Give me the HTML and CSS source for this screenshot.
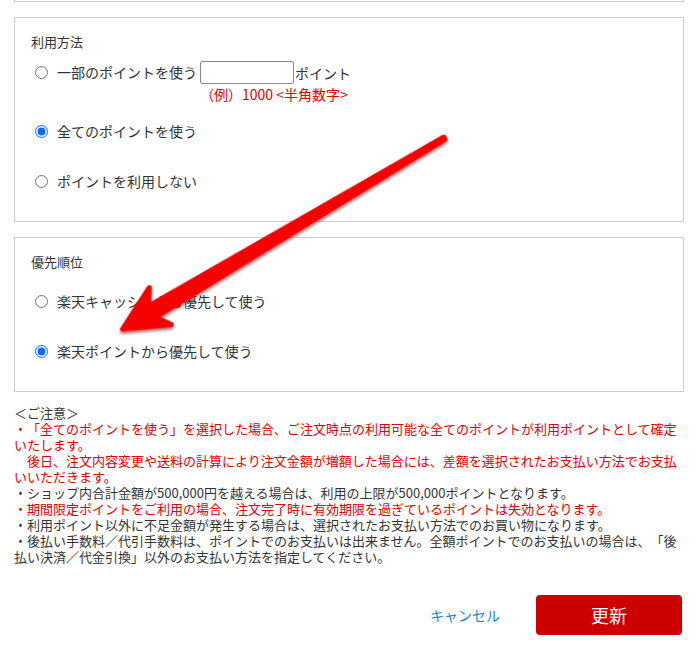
FILE: index.html
```html
<!DOCTYPE html>
<html lang="ja">
<head>
<meta charset="utf-8">
<title>ポイント利用</title>
<link rel="stylesheet" href="styles.css">
</head>
<body>
<div class="page">
  <div class="prev-box"></div>

  <section class="box">
    <div class="box-title">利用方法</div>
    <div class="option option-first">
      <input type="radio" name="use" class="radio radio-tall">
      <span class="label label-tall">一部のポイントを使う</span>
      <div class="amount">
        <div class="amount-line">
          <input type="text" class="amount-input">
          <span class="label">ポイント</span>
        </div>
        <div class="hint">（例）1000 &lt;半角数字&gt;</div>
      </div>
    </div>
    <div class="option option-second">
      <input type="radio" name="use" class="radio" checked>
      <span class="label">全てのポイントを使う</span>
    </div>
    <div class="option option-next">
      <input type="radio" name="use" class="radio">
      <span class="label">ポイントを利用しない</span>
    </div>
  </section>

  <section class="box">
    <div class="box-title">優先順位</div>
    <div class="option option-first-b">
      <input type="radio" name="prio" class="radio">
      <span class="label">楽天キャッシュから優先して使う</span>
    </div>
    <div class="option option-next">
      <input type="radio" name="prio" class="radio" checked>
      <span class="label">楽天ポイントから優先して使う</span>
    </div>
  </section>

  <div class="notes">
    <p>＜ご注意＞</p>
    <p class="red">・「全てのポイントを使う」を選択した場合、ご注文時点の利用可能な全てのポイントが利用ポイントとして確定いたします。<br>　後日、注文内容変更や送料の計算により注文金額が増額した場合には、差額を選択されたお支払い方法でお支払いいただきます。</p>
    <p>・ショップ内合計金額が500,000円を越える場合は、利用の上限が500,000ポイントとなります。</p>
    <p class="red">・期間限定ポイントをご利用の場合、注文完了時に有効期限を過ぎているポイントは失効となります。</p>
    <p>・利用ポイント以外に不足金額が発生する場合は、選択されたお支払い方法でのお買い物になります。</p>
    <p>・後払い手数料／代引手数料は、ポイントでのお支払いは出来ません。全額ポイントでのお支払いの場合は、「後払い決済／代金引換」以外のお支払い方法を指定してください。</p>
  </div>

  <div class="actions">
    <a class="cancel" href="#">キャンセル</a>
    <button class="submit" type="button">更新</button>
  </div>
</div>

<svg class="annotation" width="697" height="655" viewBox="0 0 697 655" aria-hidden="true">
  <defs>
    <filter id="arrowShadow" x="-10%" y="-10%" width="130%" height="130%">
      <feDropShadow dx="-1.5" dy="2" stdDeviation="1.5" flood-color="#5a0000" flood-opacity="0.55"/>
    </filter>
  </defs>
  <g transform="translate(121 330) rotate(-30.68)" filter="url(#arrowShadow)">
    <path d="M 2 0 L 46 21 L 36 6.5 L 376 1.2 L 376 -1.2 L 36 -6.5 L 46 -22 Z"
          fill="#f60000" stroke="#f60000" stroke-width="5" stroke-linejoin="round" stroke-linecap="round"/>
  </g>
</svg>
</body>
</html>
```

FILE: styles.css
```css
html, body {
  margin: 0;
  padding: 0;
  background: #ffffff;
}

body {
  position: relative;
  width: 697px;
  height: 655px;
  overflow: hidden;
  font-family: "Noto Sans CJK JP", "Noto Sans", sans-serif;
  color: #333333;
  text-spacing-trim: space-all;
}

.page {
  padding: 0 13px 0 14px;
}

.prev-box {
  height: 1px;
  border: 1px solid #cccccc;
  border-top: none;
}

.box {
  margin-top: 15px;
  border: 1px solid #cccccc;
  padding: 14px 16px 30px 16px;
}

.box-title {
  font-size: 13px;
  line-height: 20px;
  height: 20px;
  color: #333333;
}

.option {
  display: flex;
  align-items: center;
  font-size: 14px;
  line-height: 20px;
}

.option-first {
  align-items: flex-start;
  margin-top: 9px;
}

.option-second {
  margin-top: 17px;
}

.option-next {
  margin-top: 30px;
}

.option-first-b {
  margin-top: 19px;
}

.radio {
  width: 13px;
  height: 13px;
  margin: 0 9px 0 4px;
  accent-color: #0b6bf5;
  flex: none;
}

.radio-tall {
  margin-top: 5px;
}

.label {
  white-space: nowrap;
  color: #333333;
}

.label-tall {
  line-height: 23px;
}

.amount {
  display: flex;
  flex-direction: column;
  margin-left: 3px;
}

.amount-line {
  display: flex;
  align-items: center;
  height: 23px;
}

.amount-input {
  box-sizing: border-box;
  width: 94px;
  height: 23px;
  margin: 0 1px 0 0;
  padding: 0 4px;
  border: 1px solid #8a8a8a;
  border-radius: 2px;
  background: #ffffff;
  font-size: 14px;
}

.hint {
  color: #e00000;
  font-size: 14px;
  line-height: 20px;
  white-space: nowrap;
}

.notes {
  margin-top: 13px;
  font-size: 13px;
  line-height: 16px;
  color: #333333;
}

.notes p {
  margin: 0;
}

.notes .red {
  color: #e00000;
}

.actions {
  display: flex;
  justify-content: flex-end;
  align-items: center;
  margin-top: 30px;
  margin-right: 2px;
}

.cancel {
  font-size: 14px;
  line-height: 20px;
  color: #1a88cc;
  text-decoration: none;
  margin-right: 36px;
}

.submit {
  width: 146px;
  height: 40px;
  border: none;
  border-radius: 4px;
  background: #cc0000;
  color: #ffffff;
  font-family: "Noto Sans CJK JP", sans-serif;
  font-size: 18px;
  line-height: 40px;
  padding: 0;
}

.annotation {
  position: absolute;
  top: 0;
  left: 0;
  pointer-events: none;
}
```
